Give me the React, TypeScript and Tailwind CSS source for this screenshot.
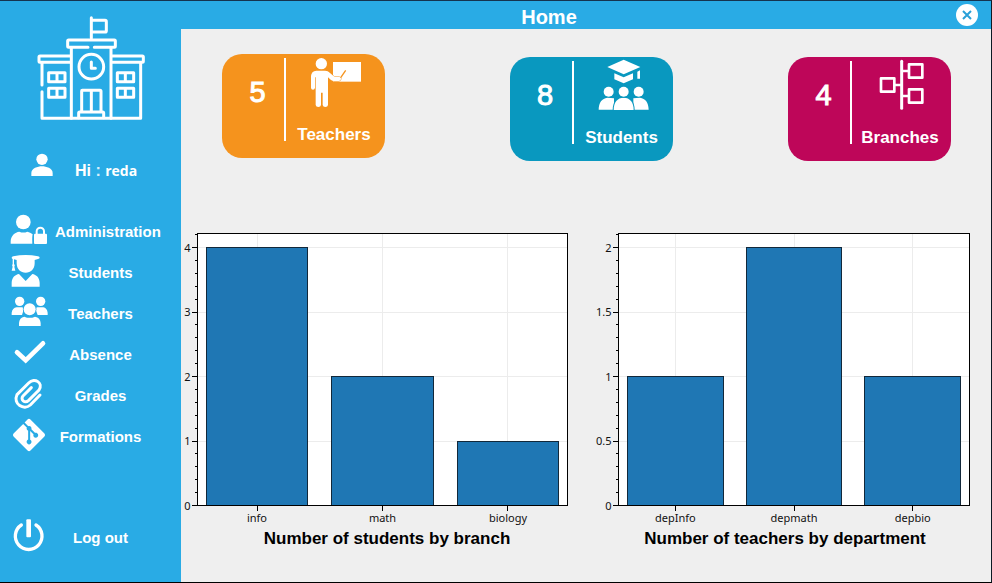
import type { ReactNode } from "react";
import { FaGitAlt } from "react-icons/fa";

function SchoolLogo() {
  return (
    <svg
      className="h-[106px] w-[108px]"
      viewBox="111 42 324 318"
      fill="none"
      stroke="white"
      strokeWidth="9"
      strokeLinejoin="round"
      strokeLinecap="round"
      aria-hidden="true"
    >
      <path d="M274 112V50M274 58H315Q319 58 319 62V89Q319 93 315 93H274" />
      <path d="M264 139H206Q203 139 203 136V120Q203 117 206 117H343Q346 117 346 120V136Q346 139 343 139H283" />
      <path d="M214 141V352M333 141V352" />
      <path d="M210 165H120Q117 165 117 168V181Q117 184 120 184H210M337 165H427Q430 165 430 168V181Q430 184 427 184H337" />
      <path d="M126 186V252M126 272V352H422V186" />
      <circle cx="274" cy="197" r="37" />
      <path d="M274 183V202H286" />
      <path d="M245 330V270Q245 268 247 268H300Q303 268 303 271V330M274 268V330M236 350V336Q236 333 239 333H308Q311 333 311 336V350" />
      <path d="M146 215H195V242H146ZM171 215V242M146 262H195V289H146ZM171 262V289" />
      <path d="M352 215H401V242H352ZM376 215V242M352 262H401V289H352ZM376 262V289" />
    </svg>
  );
}

function UserIcon() {
  return (
    <svg className="h-[23px] w-[22px]" viewBox="94 459 66 69" fill="white" aria-hidden="true">
      <circle cx="127" cy="478" r="17" />
      <path d="M95 528V519C95 505 114 499 127 499S159 505 159 519V528Z" />
    </svg>
  );
}

function MenuIcon({ viewBox, children }: { viewBox: string; children: ReactNode }) {
  return (
    <svg className="h-[35px] w-[38px] shrink-0 overflow-visible" viewBox={viewBox} fill="white" aria-hidden="true">
      {children}
    </svg>
  );
}

function StatIcon({ viewBox, children }: { viewBox: string; children: ReactNode }) {
  return (
    <svg className="h-[50px] w-[54px] overflow-visible" viewBox={viewBox} fill="white" aria-hidden="true">
      {children}
    </svg>
  );
}

const menu: { label: string; icon: ReactNode }[] = [
  {
    label: "Administration",
    icon: (
      <MenuIcon viewBox="30 72 114 105">
        <circle cx="70" cy="96" r="22" />
        <path d="M32 161V154C33 136 45 127 58 125Q70 130 82 125Q91 127 98 133Q96 140 97 161Z" />
        <rect x="102" y="131" width="39" height="31" rx="3" />
        <path d="M110 133V124A11 11 0 0 1 132 124V133" fill="none" stroke="white" strokeWidth="6" />
      </MenuIcon>
    ),
  },
  {
    label: "Students",
    icon: (
      <MenuIcon viewBox="30 195 114 105">
        <path d="M35 203Q35 200 40 199Q77 191 114 199Q119 200 119 203Q119 206 114 207L104 210V220C104 238 92 248 77 248S50 238 50 220V210L42 208V222Q46 226 43 230L46 242H35L38 230Q35 226 38 222V207Q35 206 35 203Z" />
        <path d="M35 290V278C36 262 45 254 57 252L77 273L97 252C109 254 118 262 119 278V290Z" />
      </MenuIcon>
    ),
  },
  {
    label: "Teachers",
    icon: (
      <MenuIcon viewBox="30 318 114 105">
        <circle cx="59" cy="334" r="14" />
        <circle cx="122" cy="334" r="14" />
        <path d="M35 375V368Q37 354 50 352H66Q70 353 72 356L66 375ZM143 375V368Q141 354 130 352H112Q108 353 106 356L113 375Z" />
        <circle cx="89" cy="358" r="18" stroke="#29abe5" strokeWidth="5" paintOrder="stroke" />
        <path d="M57 408V399Q58 383 73 380Q89 387 105 380Q121 383 122 399V408Z" />
      </MenuIcon>
    ),
  },
  {
    label: "Absence",
    icon: (
      <MenuIcon viewBox="30 36 114 105">
        <path d="M51 82L77 106L129 55" fill="none" stroke="white" strokeWidth="14" strokeLinecap="round" />
      </MenuIcon>
    ),
  },
  {
    label: "Grades",
    icon: (
      <MenuIcon viewBox="30 159 114 105">
        <path
          d="M120 210L91 240C72 257 38 238 51 209L86 174C104 156 131 174 117 195L86 226C74 237 60 223 69 213L94 188"
          fill="none"
          stroke="white"
          strokeWidth="9"
          strokeLinecap="round"
        />
      </MenuIcon>
    ),
  },
  {
    label: "Formations",
    icon: (
      <MenuIcon viewBox="30 282 114 105">
        <FaGitAlt x={32} y={275} size={110} />
      </MenuIcon>
    ),
  },
];

const logoutIcon = (
  <MenuIcon viewBox="30 582 114 105">
    <path
      d="M64 597A40 40 0 1 0 108 597"
      fill="none"
      stroke="white"
      strokeWidth="10"
      strokeLinecap="round"
    />
    <rect x="79" y="580" width="14" height="54" rx="3" />
  </MenuIcon>
);

function MenuButton({ label, icon }: { label: string; icon: ReactNode }) {
  return (
    <button type="button" className="flex h-[41px] w-full items-center pl-[10px] text-[15px] font-bold">
      {icon}
      <span className="ml-[7px] w-[91px] pt-[2px] text-center whitespace-nowrap">{label}</span>
    </button>
  );
}

function StatCard({ value, label, tone, icon }: { value: number; label: string; tone: string; icon: ReactNode }) {
  return (
    <section className={`flex h-[104px] w-[163px] rounded-[20px] text-white ${tone}`}>
      <div className="w-[62px] pt-5 pl-[9px] text-center text-[29px] leading-9 [-webkit-text-stroke:1px_white]">
        {value}
      </div>
      <div className="mt-1 h-[83px] w-[2px] bg-white" />
      <div className="flex flex-1 flex-col items-center pt-[3px] pr-[3px]">
        {icon}
        <h2 className="mt-[18px] text-[17px] leading-5 font-bold">{label}</h2>
      </div>
    </section>
  );
}

type Bar = { name: string; value: number };

const plotTop = 1.5;
const plotBottom = 273.5;
const majorStep = 64.5;

function BarChart(props: {
  title: string;
  bars: Bar[];
  ticks: string[];
  unit: number;
  left: number;
  right: number;
  width: number;
  captionClass: string;
}) {
  const { title, bars, ticks, unit, left, right, width, captionClass } = props;
  const barWidth = (right - left - 18) / 3.485;
  const barLeft = (i: number) => left + 9 + i * barWidth * 1.2425;
  const center = (i: number) => barLeft(i) + barWidth / 2;
  const minorTicks = Array.from({ length: 22 }, (_, i) => plotBottom - (i * majorStep) / 5);

  return (
    <figure>
      <svg className="block h-auto w-full" viewBox={`0 0 ${width} 294`} role="img" aria-label={title}>
        <g shapeRendering="crispEdges">
          <rect x={left} y={plotTop} width={right - left} height={plotBottom - plotTop} fill="white" />
          {ticks.map((tick, i) => (
            <path key={tick} d={`M${left} ${plotBottom - i * majorStep}H${right}`} stroke="#ececec" />
          ))}
          {bars.map((bar, i) => (
            <path key={bar.name} d={`M${center(i)} ${plotTop}V${plotBottom}`} stroke="#ececec" />
          ))}
          {bars.map((bar, i) => {
            const height = (bar.value / unit) * majorStep;
            return (
              <rect
                key={bar.name}
                x={barLeft(i)}
                y={plotBottom - height}
                width={barWidth}
                height={height}
                fill="#1f77b4"
                stroke="#12283a"
              />
            );
          })}
          <rect
            x={left}
            y={plotTop}
            width={right - left}
            height={plotBottom - plotTop}
            fill="none"
            stroke="black"
          />
          {minorTicks.map((y) => (
            <path key={y} d={`M${left - 2.5} ${y}H${left}`} stroke="black" />
          ))}
          {ticks.map((tick, i) => (
            <path key={tick} d={`M${left - 5.5} ${plotBottom - i * majorStep}H${left}`} stroke="black" />
          ))}
          {bars.map((bar, i) => (
            <path key={bar.name} d={`M${center(i)} ${plotBottom}v5.5`} stroke="black" />
          ))}
        </g>
        <g className="font-['Noto_Sans',sans-serif] text-[11px]" fill="#111111">
          {ticks.map((tick, i) => (
            <text key={tick} x={left - 7} y={plotBottom - i * majorStep + 4} textAnchor="end">
              {tick}
            </text>
          ))}
          {bars.map((bar, i) => (
            <text key={bar.name} x={center(i)} y={290} textAnchor="middle">
              {bar.name}
            </text>
          ))}
        </g>
      </svg>
      <figcaption className={`pt-px text-center text-[17px] leading-6 font-bold text-black ${captionClass}`}>
        {title}
      </figcaption>
    </figure>
  );
}

export default function App() {
  return (
    <div className="flex min-h-screen border-t border-r border-b border-t-[#15344f] border-r-[#0d1a24] border-b-black bg-[#efefef] font-['Liberation_Sans',Arial,sans-serif]">
      <aside className="flex w-[181px] shrink-0 flex-col bg-[#29abe5] pt-[14px] pb-6 text-white">
        <div className="pl-[37px]">
          <SchoolLogo />
        </div>
        <div className="mt-8 flex items-start pl-[31px]">
          <UserIcon />
          <p className="pt-2 pl-[22px] text-[16px] leading-5 font-bold">
            Hi <span className="text-[#d8f0fb]">:</span>{" "}
            <span className="font-['Open_Sans',sans-serif] text-[14px]">reda</span>
          </p>
        </div>
        <nav className="mt-[30px]">
          {menu.map((item) => (
            <MenuButton key={item.label} label={item.label} icon={item.icon} />
          ))}
        </nav>
        <div className="mt-auto">
          <MenuButton label="Log out" icon={logoutIcon} />
        </div>
      </aside>

      <div className="min-w-0 flex-1">
        <header className="flex h-[28px] items-center bg-[#29abe5] text-white">
          <h1 className="flex-1 pt-1 text-center text-[20px] leading-6 font-bold">Home</h1>
          <div className="flex w-[74px] justify-end pr-[13px]">
            <button
              type="button"
              aria-label="Close"
              className="flex size-[22px] items-center justify-center rounded-full bg-white"
            >
              <svg className="size-[10px]" viewBox="0 0 10 10" stroke="#29a0d8" strokeWidth="2" aria-hidden="true">
                <path d="M1 1L9 9M9 1L1 9" />
              </svg>
            </button>
          </div>
        </header>

        <main>
          <div className="grid grid-cols-[287fr_278fr_163px] items-end pt-[25px] pr-10 pl-[41px]">
            <div className="pb-[3px]">
              <StatCard
                value={5}
                label="Teachers"
                tone="bg-[#f5931d]"
                icon={
                  <StatIcon viewBox="291 36 162 150">
                    <circle cx="334" cy="56" r="17" />
                    <rect x="369" y="51" width="84" height="59" />
                    <path
                      d="M303 93Q304 78 319 77H345Q354 77 360 84L374 96H388Q394 97 393 102Q392 108 386 108H372Q367 108 362 104L354 97V180Q353 186 346 186Q339 186 338 180V143H333V180Q332 186 325 186Q318 186 317 180V97H315V128Q314 134 309 134Q303 134 303 128Z"
                      stroke="#f5931d"
                      strokeWidth="3"
                      paintOrder="stroke"
                    />
                    <path d="M392 98L407 76" stroke="#f5931d" strokeWidth="4" />
                  </StatIcon>
                }
              />
            </div>
            <StatCard
              value={8}
              label="Students"
              tone="bg-[#0998bf]"
              icon={
                <StatIcon viewBox="283 45 162 150">
                  <path d="M320 66L369 44L419 66L369 88Z" />
                  <path d="M341 85L369 97L397 85V103L369 115L341 103ZM410 80L418 76V101H410Z" />
                  <circle cx="324" cy="140" r="15" />
                  <circle cx="414" cy="140" r="15" />
                  <path d="M294 194C294 172 304 160 320 158L340 160V194ZM444 194C444 172 434 160 418 158L398 160V194Z" />
                  <g stroke="#0998bf" strokeWidth="6" paintOrder="stroke">
                    <path d="M339 195C339 172 350 158 369 158S399 172 399 195Z" />
                    <circle cx="369" cy="140" r="15" />
                  </g>
                </StatIcon>
              }
            />
            <StatCard
              value={4}
              label="Branches"
              tone="bg-[#be0659]"
              icon={
                <StatIcon viewBox="277 45 162 150">
                  <g fill="none" stroke="white" strokeWidth="8" strokeLinejoin="round">
                    <path d="M363 49V190" strokeWidth="9" strokeLinecap="round" />
                    <rect x="301" y="100" width="40" height="40" />
                    <rect x="385" y="58" width="40" height="40" />
                    <rect x="385" y="133" width="40" height="40" />
                    <path d="M341 120H363M363 78H385M363 153H385" />
                  </g>
                </StatIcon>
              }
            />
          </div>

          <div className="mt-[71px] grid grid-cols-[390fr_380fr] gap-5 pr-[19px] pl-px">
            <BarChart
              title="Number of students by branch"
              bars={[
                { name: "info", value: 4 },
                { name: "math", value: 2 },
                { name: "biology", value: 1 },
              ]}
              ticks={["0", "1", "2", "3", "4"]}
              unit={1}
              left={15.5}
              right={385.5}
              width={390}
              captionClass="pl-5"
            />
            <BarChart
              title="Number of teachers by department"
              bars={[
                { name: "depInfo", value: 1 },
                { name: "depmath", value: 2 },
                { name: "depbio", value: 1 },
              ]}
              ticks={["0", "0.5", "1", "1.5", "2"]}
              unit={0.5}
              left={26.5}
              right={377.5}
              width={380}
              captionClass="pl-1.5"
            />
          </div>
        </main>
      </div>
    </div>
  );
}
